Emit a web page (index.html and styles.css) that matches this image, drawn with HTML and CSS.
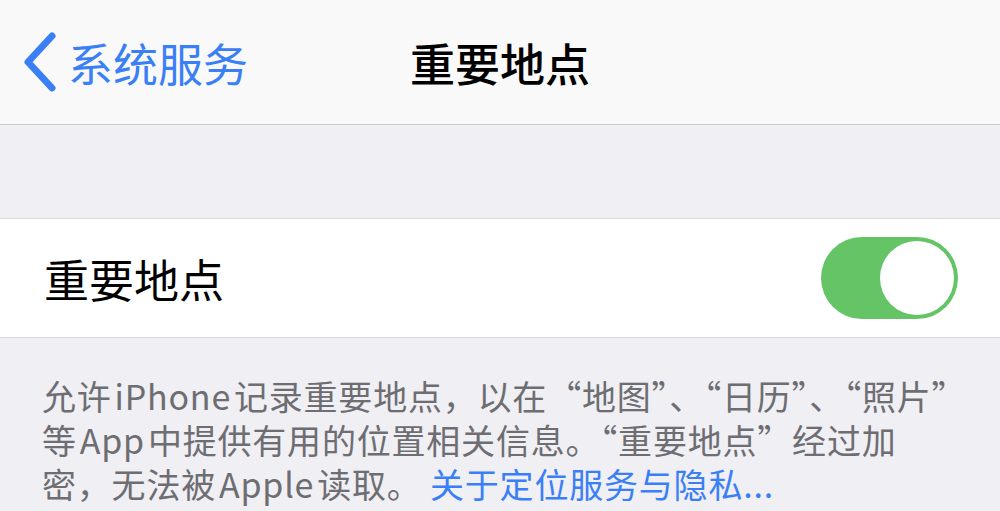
FILE: index.html
```html
<!DOCTYPE html>
<html>
<head>
<meta charset="UTF-8">
<title>重要地点</title>
<link rel="stylesheet" href="styles.css">
</head>
<body>
	<div class="navbar">
		<a class="back" href="javascript: void(0);">
			<svg class="chevron" width="40" height="60" viewBox="0 0 40 60">
				<polyline points="30,4 6,30 30,56" fill="none" stroke="#3a7ff5" stroke-width="7" stroke-linecap="round" stroke-linejoin="round"/>
			</svg>
			<span>系统服务</span>
		</a>
		<div class="title">重要地点</div>
		<div></div>
	</div>

	<div class="gap"></div>

	<div class="group">
		<div class="cell">
			<span class="label">重要地点</span>
			<div class="toggle on"><div class="knob"></div></div>
		</div>
	</div>

	<p class="footer">允许&#8202;iPhone&#8202;记录重要地点，以在“地图”、“日历”、“照片”<br>等&#8202;App&#8202;中提供有用的位置相关信息。“重要地点”经过加<br>密，无法被&#8202;Apple&#8202;读取。 <a href="javascript: void(0);">关于定位服务与隐私...</a></p>
</body>
</html>
```

FILE: styles.css
```css
* {
	padding: 0;
	margin: 0;
	box-sizing: border-box;
}

body {
	background-color: #efeff4;
	font-family: "Noto Sans CJK SC", "Noto Sans", sans-serif;
	color: #000;
}

a {
	text-decoration: none;
}

.navbar {
	height: 125px;
	background-color: #f9f9f9;
	border-bottom: 1px solid #c9c9cc;
	display: grid;
	grid-template-columns: 1fr auto 1fr;
	align-items: center;
}

.back {
	display: flex;
	align-items: center;
	padding-left: 22px;
	color: #3a7ff5;
	font-size: 45px;
	gap: 6px;
}

.title {
	font-size: 45px;
	font-weight: 500;
}

.gap {
	height: 93px;
}

.group {
	background-color: #fff;
	border-top: 1px solid #d9d9dd;
	border-bottom: 1px solid #d9d9dd;
}

.cell {
	height: 118px;
	display: flex;
	align-items: center;
	justify-content: space-between;
	padding: 0 42px 0 44px;
}

.label {
	font-size: 45px;
}

.toggle {
	width: 137px;
	height: 82px;
	border-radius: 41px;
	background-color: #e5e5ea;
	padding: 4px;
	display: flex;
}

.toggle.on {
	background-color: #64c466;
	justify-content: flex-end;
}

.knob {
	width: 74px;
	height: 74px;
	border-radius: 50%;
	background-color: #fff;
}

.footer {
	padding: 36px 10px 0 42px;
	font-size: 34px;
	line-height: 44px;
	letter-spacing: 0.8px;
	color: #6d6d72;
	white-space: nowrap;
}

.footer a {
	color: #3a7ff5;
}
```
